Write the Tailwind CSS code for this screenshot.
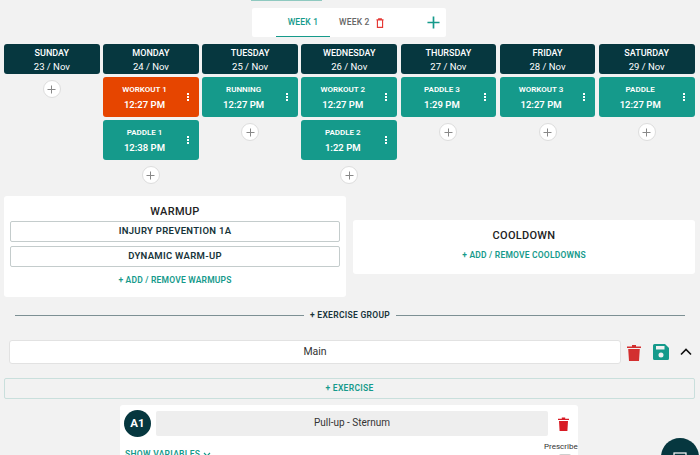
<!DOCTYPE html>
<html lang="en">
<head>
    <meta charset="UTF-8" />
    <title>Program builder</title>
    <script src="https://cdn.jsdelivr.net/npm/@tailwindcss/browser@4"></script>
</head>
<body class="bg-[#f2f2f2] font-['Roboto',sans-serif] w-[700px] h-[455px] overflow-hidden relative">

    <!-- week tabs -->
    <div class="h-[44px] flex flex-col items-center relative">
        <div class="absolute top-0 left-[251px] w-[71px] h-[1px] bg-[#8fc9c0]"></div>
        <div class="mt-[8px] ml-[-2px] w-[194px] h-[29px] bg-white rounded-[2px] flex items-center relative text-[8.500px] font-medium tracking-[0.200px]">
            <div class="w-[54px] ml-[24px] h-full flex items-center justify-center text-[#159a8b] border-b border-[#159a8b]">WEEK 1</div>
            <div class="ml-[9px] text-[#666]">WEEK 2</div>
            <svg class="ml-[6px]" width="8" height="10" viewBox="0 0 9 11" fill="none" stroke="#e53935" stroke-width="1.300"><path d="M0.500 2h8M3 2V.8h3V2M1.600 2.600v7.800h5.800V2.600"/></svg>
            <svg class="absolute left-[175px] top-[8px]" width="13" height="13" viewBox="0 0 14 14" stroke="#159a8b" stroke-width="1.800"><path d="M7 0.500v13M0.500 7h13"/></svg>
        </div>
    </div>

    <!-- calendar -->
    <div class="grid grid-cols-7 gap-x-[3.500px] pl-[4px] pr-[5.500px] h-[152px] items-start">
        <div class="flex flex-col items-center">
            <div class="w-full h-[30px] bg-[#06373f] rounded-[3px] text-white text-center text-[9px] leading-[13px] font-medium pt-[3px]">SUNDAY<br><span class="text-[9.500px] font-normal">23 / Nov</span></div>
            <button class="mt-[6px] w-[18px] h-[18px] rounded-full bg-white border border-[#ddd] flex items-center justify-center"><svg width="9" height="9" viewBox="0 0 9 9" stroke="#888"><path d="M4.500 0.500v8M0.500 4.500h8"/></svg></button>
        </div>
        <div class="flex flex-col items-center">
            <div class="w-full h-[30px] bg-[#06373f] rounded-[3px] text-white text-center text-[9px] leading-[13px] font-medium pt-[3px]">MONDAY<br><span class="text-[9.500px] font-normal">24 / Nov</span></div>
            <div class="relative mt-[3px] w-full h-[40px] bg-[#e64500] rounded-[3px] text-white text-center pt-[8px] pr-[13px]">
                <div class="text-[8px] leading-[10px] font-semibold">WORKOUT 1</div>
                <div class="text-[9.500px] leading-[12px] mt-[4px] font-semibold">12:27 PM</div>
                <div class="absolute right-[10px] top-[16px] flex flex-col gap-[1px]"><i class="w-[2px] h-[2px] bg-white"></i><i class="w-[2px] h-[2px] bg-white"></i><i class="w-[2px] h-[2px] bg-white"></i></div>
            </div>
            <div class="relative mt-[3px] w-full h-[40px] bg-[#159a8b] rounded-[3px] text-white text-center pt-[8px] pr-[13px]">
                <div class="text-[8px] leading-[10px] font-semibold">PADDLE 1</div>
                <div class="text-[9.500px] leading-[12px] mt-[4px] font-semibold">12:38 PM</div>
                <div class="absolute right-[10px] top-[16px] flex flex-col gap-[1px]"><i class="w-[2px] h-[2px] bg-white"></i><i class="w-[2px] h-[2px] bg-white"></i><i class="w-[2px] h-[2px] bg-white"></i></div>
            </div>
            <button class="mt-[6px] w-[18px] h-[18px] rounded-full bg-white border border-[#ddd] flex items-center justify-center"><svg width="9" height="9" viewBox="0 0 9 9" stroke="#888"><path d="M4.500 0.500v8M0.500 4.500h8"/></svg></button>
        </div>
        <div class="flex flex-col items-center">
            <div class="w-full h-[30px] bg-[#06373f] rounded-[3px] text-white text-center text-[9px] leading-[13px] font-medium pt-[3px]">TUESDAY<br><span class="text-[9.500px] font-normal">25 / Nov</span></div>
            <div class="relative mt-[3px] w-full h-[40px] bg-[#159a8b] rounded-[3px] text-white text-center pt-[8px] pr-[13px]">
                <div class="text-[8px] leading-[10px] font-semibold">RUNNING</div>
                <div class="text-[9.500px] leading-[12px] mt-[4px] font-semibold">12:27 PM</div>
                <div class="absolute right-[10px] top-[16px] flex flex-col gap-[1px]"><i class="w-[2px] h-[2px] bg-white"></i><i class="w-[2px] h-[2px] bg-white"></i><i class="w-[2px] h-[2px] bg-white"></i></div>
            </div>
            <button class="mt-[6px] w-[18px] h-[18px] rounded-full bg-white border border-[#ddd] flex items-center justify-center"><svg width="9" height="9" viewBox="0 0 9 9" stroke="#888"><path d="M4.500 0.500v8M0.500 4.500h8"/></svg></button>
        </div>
        <div class="flex flex-col items-center">
            <div class="w-full h-[30px] bg-[#06373f] rounded-[3px] text-white text-center text-[9px] leading-[13px] font-medium pt-[3px]">WEDNESDAY<br><span class="text-[9.500px] font-normal">26 / Nov</span></div>
            <div class="relative mt-[3px] w-full h-[40px] bg-[#159a8b] rounded-[3px] text-white text-center pt-[8px] pr-[13px]">
                <div class="text-[8px] leading-[10px] font-semibold">WORKOUT 2</div>
                <div class="text-[9.500px] leading-[12px] mt-[4px] font-semibold">12:27 PM</div>
                <div class="absolute right-[10px] top-[16px] flex flex-col gap-[1px]"><i class="w-[2px] h-[2px] bg-white"></i><i class="w-[2px] h-[2px] bg-white"></i><i class="w-[2px] h-[2px] bg-white"></i></div>
            </div>
            <div class="relative mt-[3px] w-full h-[40px] bg-[#159a8b] rounded-[3px] text-white text-center pt-[8px] pr-[13px]">
                <div class="text-[8px] leading-[10px] font-semibold">PADDLE 2</div>
                <div class="text-[9.500px] leading-[12px] mt-[4px] font-semibold">1:22 PM</div>
                <div class="absolute right-[10px] top-[16px] flex flex-col gap-[1px]"><i class="w-[2px] h-[2px] bg-white"></i><i class="w-[2px] h-[2px] bg-white"></i><i class="w-[2px] h-[2px] bg-white"></i></div>
            </div>
            <button class="mt-[6px] w-[18px] h-[18px] rounded-full bg-white border border-[#ddd] flex items-center justify-center"><svg width="9" height="9" viewBox="0 0 9 9" stroke="#888"><path d="M4.500 0.500v8M0.500 4.500h8"/></svg></button>
        </div>
        <div class="flex flex-col items-center">
            <div class="w-full h-[30px] bg-[#06373f] rounded-[3px] text-white text-center text-[9px] leading-[13px] font-medium pt-[3px]">THURSDAY<br><span class="text-[9.500px] font-normal">27 / Nov</span></div>
            <div class="relative mt-[3px] w-full h-[40px] bg-[#159a8b] rounded-[3px] text-white text-center pt-[8px] pr-[13px]">
                <div class="text-[8px] leading-[10px] font-semibold">PADDLE 3</div>
                <div class="text-[9.500px] leading-[12px] mt-[4px] font-semibold">1:29 PM</div>
                <div class="absolute right-[10px] top-[16px] flex flex-col gap-[1px]"><i class="w-[2px] h-[2px] bg-white"></i><i class="w-[2px] h-[2px] bg-white"></i><i class="w-[2px] h-[2px] bg-white"></i></div>
            </div>
            <button class="mt-[6px] w-[18px] h-[18px] rounded-full bg-white border border-[#ddd] flex items-center justify-center"><svg width="9" height="9" viewBox="0 0 9 9" stroke="#888"><path d="M4.500 0.500v8M0.500 4.500h8"/></svg></button>
        </div>
        <div class="flex flex-col items-center">
            <div class="w-full h-[30px] bg-[#06373f] rounded-[3px] text-white text-center text-[9px] leading-[13px] font-medium pt-[3px]">FRIDAY<br><span class="text-[9.500px] font-normal">28 / Nov</span></div>
            <div class="relative mt-[3px] w-full h-[40px] bg-[#159a8b] rounded-[3px] text-white text-center pt-[8px] pr-[13px]">
                <div class="text-[8px] leading-[10px] font-semibold">WORKOUT 3</div>
                <div class="text-[9.500px] leading-[12px] mt-[4px] font-semibold">12:27 PM</div>
                <div class="absolute right-[10px] top-[16px] flex flex-col gap-[1px]"><i class="w-[2px] h-[2px] bg-white"></i><i class="w-[2px] h-[2px] bg-white"></i><i class="w-[2px] h-[2px] bg-white"></i></div>
            </div>
            <button class="mt-[6px] w-[18px] h-[18px] rounded-full bg-white border border-[#ddd] flex items-center justify-center"><svg width="9" height="9" viewBox="0 0 9 9" stroke="#888"><path d="M4.500 0.500v8M0.500 4.500h8"/></svg></button>
        </div>
        <div class="flex flex-col items-center">
            <div class="w-full h-[30px] bg-[#06373f] rounded-[3px] text-white text-center text-[9px] leading-[13px] font-medium pt-[3px]">SATURDAY<br><span class="text-[9.500px] font-normal">29 / Nov</span></div>
            <div class="relative mt-[3px] w-full h-[40px] bg-[#159a8b] rounded-[3px] text-white text-center pt-[8px] pr-[13px]">
                <div class="text-[8px] leading-[10px] font-semibold">PADDLE</div>
                <div class="text-[9.500px] leading-[12px] mt-[4px] font-semibold">12:27 PM</div>
                <div class="absolute right-[10px] top-[16px] flex flex-col gap-[1px]"><i class="w-[2px] h-[2px] bg-white"></i><i class="w-[2px] h-[2px] bg-white"></i><i class="w-[2px] h-[2px] bg-white"></i></div>
            </div>
            <button class="mt-[6px] w-[18px] h-[18px] rounded-full bg-white border border-[#ddd] flex items-center justify-center"><svg width="9" height="9" viewBox="0 0 9 9" stroke="#888"><path d="M4.500 0.500v8M0.500 4.500h8"/></svg></button>
        </div>
    </div>

    <!-- warmup / cooldown -->
    <div class="flex items-center gap-[7px] px-[4px] h-[101px]">
        <div class="w-[342px] h-[101px] bg-white rounded-[3px] px-[6px] pt-[8px]">
            <div class="text-center text-[11px] leading-[16px] font-medium text-[#222] tracking-[0.300px]">WARMUP</div>
            <div class="mt-[1px] h-[21px] border border-[#c4cccc] rounded-[2px] flex items-center justify-center text-[9.500px] font-semibold tracking-[0.300px] text-[#17343a]">INJURY PREVENTION 1A</div>
            <div class="mt-[4px] h-[21px] border border-[#c4cccc] rounded-[2px] flex items-center justify-center text-[9.500px] font-semibold tracking-[0.300px] text-[#17343a]">DYNAMIC WARM-UP</div>
            <div class="mt-[7px] text-center text-[8.500px] leading-[13px] font-semibold tracking-[0.200px] text-[#159a8b]">+ ADD / REMOVE WARMUPS</div>
        </div>
        <div class="w-[342px] h-[54px] bg-white rounded-[3px] pt-[8px]">
            <div class="text-center text-[11px] leading-[16px] font-medium text-[#222] tracking-[0.300px]">COOLDOWN</div>
            <div class="mt-[5px] text-center text-[8.500px] leading-[13px] font-semibold tracking-[0.200px] text-[#159a8b]">+ ADD / REMOVE COOLDOWNS</div>
        </div>
    </div>

    <!-- exercise group divider -->
    <div class="mt-[12px] h-[13px] px-[15px] flex items-center gap-[6px]">
        <div class="flex-1 h-px bg-[#7d9094]"></div>
        <div class="text-[8.500px] font-semibold tracking-[0.300px] text-[#17343a]">+ EXERCISE GROUP</div>
        <div class="flex-1 h-px bg-[#7d9094]"></div>
    </div>

    <!-- group name row -->
    <div class="mt-[18px] h-[24px] flex items-center pl-[9px]">
        <div class="w-[612px] h-[24px] bg-white border border-[#e2e2e2] rounded-[3px] flex items-center justify-center text-[10.500px] text-[#333]">Main</div>
        <svg class="ml-[6px]" width="14" height="17" viewBox="0 0 14 17" fill="#d32f2f"><path d="M0 2.500h5V1h4v1.500h5V4H0zM1.200 5h11.600l-.8 12H2z"/></svg>
        <svg class="ml-[12px]" width="16" height="16" viewBox="0 0 16 16" fill="#159a8b"><path fill-rule="evenodd" d="M1.500 0H12l4 4v10.500a1.500 1.500 0 0 1-1.500 1.500h-13A1.500 1.500 0 0 1 0 14.500v-13A1.500 1.500 0 0 1 1.500 0zM3 2v3.500h8.500V2zM8 8.500a2.500 2.500 0 1 0 0 5 2.500 2.500 0 0 0 0-5z"/></svg>
        <svg class="ml-[11px]" width="12" height="8" viewBox="0 0 12 8" fill="none" stroke="#111" stroke-width="1.600"><path d="M1 6.500l5-5 5 5"/></svg>
    </div>

    <!-- add exercise -->
    <div class="mt-[14px] mx-[4px] w-[691px] h-[21px] border border-[#c9dfdc] rounded-[2px] flex items-center justify-center text-[8.500px] font-semibold tracking-[0.300px] text-[#159a8b]">+ EXERCISE</div>

    <!-- exercise card -->
    <div class="mt-[6px] ml-[120px] w-[458px] h-[60px] bg-white rounded-t-[3px] relative">
        <div class="flex items-center pt-[5px] pl-[4px]">
            <div class="w-[27px] h-[27px] rounded-full bg-[#06373f] text-white flex items-center justify-center text-[11.500px] font-bold">A1</div>
            <div class="ml-[5px] w-[392px] h-[25px] bg-[#eeeeee] rounded-[2px] flex items-center justify-center text-[10px] pb-[2px] text-[#333]">Pull-up - Sternum</div>
            <svg class="ml-[10px]" width="11" height="14" viewBox="0 0 11 14" fill="#d81b25"><path d="M0 1.800h3.800V.6h3.400v1.200H11V3H0zM1 4h9l-.6 10H1.600z"/></svg>
        </div>
        <div class="absolute left-[5px] top-[43px] text-[8.500px] leading-[12px] font-semibold tracking-[0.300px] text-[#159a8b] flex items-center gap-[3px]">SHOW VARIABLES <svg width="8" height="5" viewBox="0 0 8 5" fill="none" stroke="#159a8b" stroke-width="1.200"><path d="M1 1l3 3 3-3"/></svg></div>
        <div class="absolute left-[424px] top-[36px] text-[8px] leading-[11px] text-[#333]">Prescribe</div>
        <div class="absolute left-[439px] top-[49px] w-[12px] h-[12px] bg-[#cfcfcf] rounded-[2px]"></div>
    </div>

    <!-- floating button -->
    <div class="absolute left-[661px] top-[438px] w-[38px] h-[38px] rounded-full bg-[#06373f] flex justify-center pt-[14px]">
        <svg width="14" height="12" viewBox="0 0 14 12" fill="none" stroke="#fff" stroke-width="1.200"><rect x="1" y="1" width="12" height="10"/><path d="M3 4h4M3 6.500h4M9 4h2v3H9z"/></svg>
    </div>

</body>
</html>
